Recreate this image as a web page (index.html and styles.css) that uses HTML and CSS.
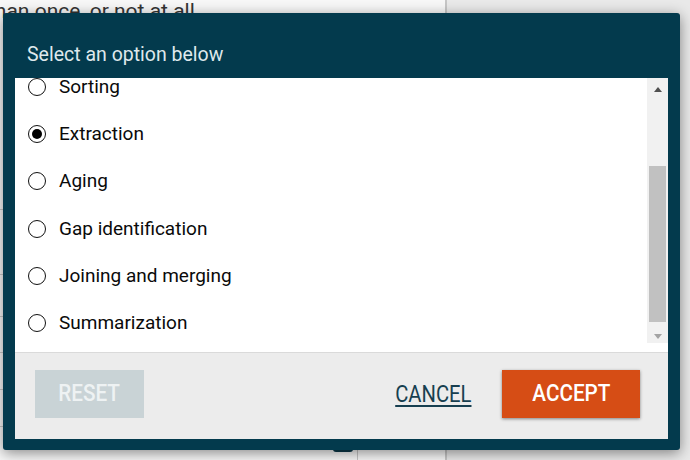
FILE: index.html
```html
<!DOCTYPE html>
<html lang="en">
<head>
<meta charset="utf-8">
<title>Select an option</title>
<link rel="stylesheet" href="styles.css">
</head>
<body>
<div class="page">
  <main class="doc">
    <p class="doc-text">than once, or not at all</p>
    <div class="doc-rows">
      <div class="doc-row r1"></div>
      <div class="doc-row r2"></div>
      <div class="doc-row r3"></div>
      <div class="doc-row r4"></div>
      <div class="doc-row r5"></div>
      <div class="doc-row r6"></div>
    </div>
    <div class="doc-foot">
      <span class="doc-tab"></span>
      <span class="doc-cell"></span>
    </div>
  </main>
  <aside class="side"></aside>
</div>

<div class="dialog" role="dialog" aria-labelledby="dlg-title">
  <header class="dlg-head">
    <h2 class="dlg-title" id="dlg-title">Select an option below</h2>
  </header>
  <div class="dlg-body">
    <div class="opts-wrap">
      <ul class="opts">
        <li class="opt"><span class="radio"></span><span class="opt-label">Sorting</span></li>
        <li class="opt"><span class="radio checked"></span><span class="opt-label">Extraction</span></li>
        <li class="opt"><span class="radio"></span><span class="opt-label">Aging</span></li>
        <li class="opt"><span class="radio"></span><span class="opt-label">Gap identification</span></li>
        <li class="opt"><span class="radio"></span><span class="opt-label">Joining and merging</span></li>
        <li class="opt"><span class="radio"></span><span class="opt-label">Summarization</span></li>
      </ul>
    </div>
    <div class="sbar">
      <span class="sb-btn"><span class="sb-up"></span></span>
      <div class="sb-track"><div class="sb-thumb"></div></div>
      <span class="sb-btn"><span class="sb-down"></span></span>
    </div>
  </div>
  <footer class="dlg-foot">
    <button class="btn btn-reset" type="button"><span class="btn-txt">RESET</span></button>
    <span class="spacer"></span>
    <a class="btn-cancel" href="#"><span class="btn-txt">CANCEL</span></a>
    <button class="btn btn-accept" type="button"><span class="btn-txt">ACCEPT</span></button>
  </footer>
</div>
</body>
</html>
```

FILE: styles.css
```css
* { box-sizing: border-box; }

html, body {
  margin: 0;
  padding: 0;
  width: 690px;
  height: 460px;
  overflow: hidden;
  font-family: Roboto, "Noto Sans", "Liberation Sans", sans-serif;
}

body { position: relative; background: #e8e8e8; }

.page {
  display: flex;
  height: 460px;
}

.doc {
  width: 447px;
  background: #f7f7f7;
  border-right: 2px solid #c6c6c6;
  display: flex;
  flex-direction: column;
}

.doc-text {
  margin: 0 0 0 -12px;
  font-size: 21px;
  line-height: 22px;
  color: #333;
  white-space: nowrap;
}

.doc-rows { flex: 1; display: flex; flex-direction: column; }
.doc-row { border-bottom: 1px solid #c9c9c9; }
.r1 { height: 188px; }
.r2 { height: 65px; }
.r3 { height: 42px; }
.r4 { height: 36px; }
.r5 { height: 37px; }
.r6 { height: 37px; }

.doc-foot {
  height: 18px;
  display: flex;
  align-items: flex-start;
}
.doc-tab {
  width: 20px;
  height: 10px;
  margin-left: 333px;
  background: #0b3a4b;
  border-radius: 0 0 3px 3px;
}
.doc-cell {
  margin-left: 4px;
  width: 1px;
  height: 18px;
  background: #c6c6c6;
}

.side { flex: 1; background: #e9e9e9; }

/* dialog */
.dialog {
  position: absolute;
  left: 3px;
  top: 13px;
  width: 677px;
  height: 437px;
  background: #033a4d;
  border-radius: 3px;
  padding: 0 12px 11px;
  display: flex;
  flex-direction: column;
  box-shadow: 0 3px 14px rgba(0, 0, 0, 0.45);
}

.dlg-head {
  height: 65px;
  padding: 30px 0 0 12px;
}

.dlg-title {
  margin: 0;
  font-size: 19.5px;
  line-height: 24px;
  font-weight: 400;
  color: #dfe8ec;
}

.dlg-body {
  height: 274px;
  background: #fff;
  padding-bottom: 9px;
  display: flex;
}

.opts-wrap {
  flex: 1;
  overflow: hidden;
}

.opts {
  list-style: none;
  margin: -14.5px 0 0;
  padding: 0 0 0 13px;
}

.opt {
  height: 47.2px;
  display: flex;
  align-items: center;
  gap: 13px;
}

.radio {
  width: 18px;
  height: 18px;
  border: 1.7px solid #111;
  border-radius: 50%;
  background: #fff;
  display: flex;
  align-items: center;
  justify-content: center;
  flex: none;
}
.radio.checked::after {
  content: "";
  width: 10px;
  height: 10px;
  border-radius: 50%;
  background: #000;
}

.opt-label {
  font-size: 19px;
  color: #0a0a0a;
  line-height: 24px;
}

/* scrollbar */
.sbar {
  width: 21px;
  background: #f1f1f1;
  display: flex;
  flex-direction: column;
}
.sb-btn {
  height: 17px;
  display: flex;
  align-items: center;
  justify-content: center;
}
.sb-up {
  width: 0; height: 0;
  border-left: 4.5px solid transparent;
  border-right: 4.5px solid transparent;
  border-bottom: 5px solid #505050;
  margin-top: 6px;
}
.sb-down {
  width: 0; height: 0;
  border-left: 4.5px solid transparent;
  border-right: 4.5px solid transparent;
  border-top: 5px solid #a3a3a3;
  margin-top: 4px;
}
.sb-track {
  flex: 1;
  padding: 71px 2px 0;
}
.sb-thumb {
  height: 156px;
  background: #c1c1c1;
}

/* footer */
.dlg-foot {
  height: 87px;
  background: #ececec;
  border-top: 1px solid #dadada;
  padding: 17px 28px 21px 20px;
  display: flex;
  align-items: center;
}

.spacer { flex: 1; }

.btn {
  border: 0;
  height: 48px;
  font-family: Roboto, "Noto Sans", "Liberation Sans", sans-serif;
  font-size: 23.5px;
  font-weight: 500;
  padding: 0;
  display: flex;
  align-items: center;
  justify-content: center;
  cursor: pointer;
}

.btn-txt {
  display: inline-block;
  transform: scaleX(0.88);
  line-height: 1;
}

.btn-reset {
  width: 109px;
  background: #c9d3d6;
  color: #eef2f3;
}

.btn-accept {
  width: 138px;
  margin-left: 24px;
  background: #d64d15;
  color: #fff;
  box-shadow: 0 1px 3px rgba(0, 0, 0, 0.45);
}

.btn-cancel {
  font-size: 23.5px;
  font-weight: 400;
  color: #173f50;
  text-decoration: none;
}
.btn-cancel .btn-txt {
  transform: scaleX(0.86);
  text-decoration: underline;
  text-decoration-thickness: 2px;
  text-underline-offset: 3px;
}
```
